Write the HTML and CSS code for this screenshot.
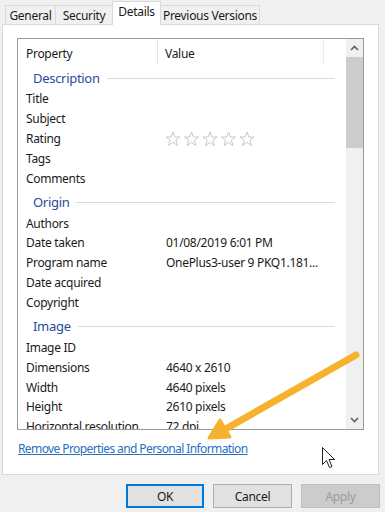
FILE: index.html
```html
<!DOCTYPE html>
<html>
<head>
<meta charset="utf-8">
<link rel="stylesheet" href="styles.css">
</head>
<body>
<div class="dialog">
  <div class="tabs">
    <div class="tab t-general">General</div>
    <div class="tab t-security">Security</div>
    <div class="tab active t-details">Details</div>
    <div class="tab t-prev">Previous Versions</div>
  </div>
  <div class="page">
    <div class="list">
      <div class="list-body">
        <div class="head">
          <div class="hk">Property</div>
          <div class="hv">Value</div>
        </div>
        <div class="group"><span>Description</span><i></i></div>
        <div class="row"><div class="k">Title</div><div class="v"></div></div>
        <div class="row"><div class="k">Subject</div><div class="v"></div></div>
        <div class="row"><div class="k">Rating</div><div class="v">
          <svg class="stars" width="92" height="16" viewBox="0 0 92 16">
            <g fill="none" stroke="#c8c8c8" stroke-width="1">
              <polygon points="8,1 9.9,6 15,6 10.9,9.2 12.4,14.5 8,11.3 3.6,14.5 5.1,9.2 1,6 6.1,6"/>
              <polygon transform="translate(18.5 0)" points="8,1 9.9,6 15,6 10.9,9.2 12.4,14.5 8,11.3 3.6,14.5 5.1,9.2 1,6 6.1,6"/>
              <polygon transform="translate(37 0)" points="8,1 9.9,6 15,6 10.9,9.2 12.4,14.5 8,11.3 3.6,14.5 5.1,9.2 1,6 6.1,6"/>
              <polygon transform="translate(55.5 0)" points="8,1 9.9,6 15,6 10.9,9.2 12.4,14.5 8,11.3 3.6,14.5 5.1,9.2 1,6 6.1,6"/>
              <polygon transform="translate(74 0)" points="8,1 9.9,6 15,6 10.9,9.2 12.4,14.5 8,11.3 3.6,14.5 5.1,9.2 1,6 6.1,6"/>
            </g>
          </svg>
        </div></div>
        <div class="row"><div class="k">Tags</div><div class="v"></div></div>
        <div class="row"><div class="k">Comments</div><div class="v"></div></div>
        <div class="group"><span>Origin</span><i></i></div>
        <div class="row"><div class="k">Authors</div><div class="v"></div></div>
        <div class="row"><div class="k">Date taken</div><div class="v">01/08/2019 6:01 PM</div></div>
        <div class="row"><div class="k">Program name</div><div class="v">OnePlus3-user 9 PKQ1.181...</div></div>
        <div class="row"><div class="k">Date acquired</div><div class="v"></div></div>
        <div class="row"><div class="k">Copyright</div><div class="v"></div></div>
        <div class="group"><span>Image</span><i></i></div>
        <div class="row"><div class="k">Image ID</div><div class="v"></div></div>
        <div class="row"><div class="k">Dimensions</div><div class="v">4640 x 2610</div></div>
        <div class="row"><div class="k">Width</div><div class="v">4640 pixels</div></div>
        <div class="row"><div class="k">Height</div><div class="v">2610 pixels</div></div>
        <div class="row"><div class="k">Horizontal resolution</div><div class="v">72 dpi</div></div>
      </div>
      <div class="scroll">
        <div class="sbtn">
          <svg width="9" height="6" viewBox="0 0 9 6"><polyline points="1,5 4.5,1.5 8,5" fill="none" stroke="#606060" stroke-width="1.6"/></svg>
        </div>
        <div class="thumb"></div>
        <div class="track"></div>
        <div class="sbtn">
          <svg width="9" height="6" viewBox="0 0 9 6"><polyline points="1,1 4.5,4.5 8,1" fill="none" stroke="#606060" stroke-width="1.6"/></svg>
        </div>
      </div>
    </div>
    <a class="link" href="#">Remove Properties and Personal Information</a>
  </div>
  <div class="buttons">
    <div class="btn ok">OK</div>
    <div class="btn">Cancel</div>
    <div class="btn disabled">Apply</div>
  </div>
</div>
<svg class="overlay" width="385" height="512" viewBox="0 0 385 512">
  <line x1="356" y1="355" x2="222" y2="431" stroke="#f6b12e" stroke-width="7" stroke-linecap="round"/>
  <polygon points="209,438 220,420 230,437" fill="#f6b12e" stroke="#f6b12e" stroke-width="3" stroke-linejoin="round"/>
  <path d="M322.5,447.5 L322.5,464.5 L326.5,460.5 L329.5,467.5 L332,466.5 L329,459.5 L334.5,459.5 Z" fill="#fff" stroke="#222" stroke-width="1" stroke-linejoin="round"/>
</svg>
</body>
</html>
```
FILE: styles.css
```css
html, body {
  margin: 0;
  padding: 0;
}
body {
  width: 385px;
  height: 512px;
  overflow: hidden;
  position: relative;
  background: #f0f0f0;
  font-family: "Noto Sans", "Open Sans", sans-serif;
  font-size: 12px;
  letter-spacing: -0.3px;
  color: #1a1a1a;
}
.dialog {
  display: flex;
  flex-direction: column;
}
.tabs {
  display: flex;
  align-items: flex-end;
  height: 24px;
  padding-left: 5px;
  position: relative;
  z-index: 1;
}
.tab {
  height: 19px;
  line-height: 19px;
  box-sizing: border-box;
  border: 1px solid #d9d9d9;
  border-bottom: none;
  background: #f0f0f0;
  text-align: center;
  white-space: nowrap;
  margin-right: -1px;
}
.t-general { width: 51px; }
.t-security { width: 58px; }
.t-details { width: 49px; }
.t-prev { width: 100px; }
.tab.active {
  height: 24px;
  line-height: 20px;
  background: #fff;
  margin-bottom: -1px;
  position: relative;
}
.page {
  margin-left: 2px;
  width: 377px;
  height: 451px;
  box-sizing: border-box;
  background: #fff;
  border: 1px solid #d9d9d9;
  padding: 13px 14px 0 14px;
  display: flex;
  flex-direction: column;
}
.list {
  height: 392px;
  box-sizing: border-box;
  border: 1px solid #9a9a9a;
  display: flex;
  overflow: hidden;
}
.list-body {
  flex: 1;
  overflow: hidden;
}
.head {
  display: flex;
  height: 25px;
  align-items: stretch;
}
.hk {
  width: 140px;
  box-sizing: border-box;
  padding: 3px 0 0 8px;
  display: flex;
  align-items: center;
  border-right: 1px solid #e5e5e5;
}
.hv {
  width: 166px;
  box-sizing: border-box;
  padding: 3px 0 0 7px;
  display: flex;
  align-items: center;
  border-right: 1px solid #ececec;
}
.group {
  height: 25px;
  box-sizing: border-box;
  padding: 2px 11px 0 15px;
  display: flex;
  align-items: center;
  color: #2a4b9b;
  font-size: 13px;
}
.group i {
  flex: 1;
  height: 1px;
  background: #d2dce4;
  margin-left: 7px;
  margin-top: 1px;
}
.row {
  display: flex;
  height: 19.85px;
  align-items: center;
  white-space: nowrap;
}
.k {
  width: 140px;
  box-sizing: border-box;
  padding-left: 8px;
}
.v {
  padding-left: 8px;
  display: flex;
  align-items: center;
}
.stars {
  display: block;
  margin-left: -1px;
}
.scroll {
  width: 17px;
  background: #f0f0f0;
  display: flex;
  flex-direction: column;
}
.sbtn {
  height: 18px;
  display: flex;
  align-items: center;
  justify-content: center;
}
.thumb {
  height: 91px;
  background: #cdcdcd;
}
.track {
  flex: 1;
}
.link {
  margin-top: 11px;
  margin-left: 1px;
  color: #2a6fc0;
  text-decoration: underline;
  line-height: 16px;
  letter-spacing: -0.6px;
  align-self: flex-start;
}
.buttons {
  display: flex;
  justify-content: flex-end;
  gap: 9px;
  padding-right: 5px;
  margin-top: 9px;
}
.btn {
  width: 79px;
  height: 24px;
  box-sizing: border-box;
  background: #e1e1e1;
  border: 1px solid #adadad;
  display: flex;
  align-items: center;
  justify-content: center;
}
.btn.ok {
  border: 2px solid #0078d7;
  width: 78px;
}
.btn.disabled {
  background: #cccccc;
  border-color: #bfbfbf;
  color: #9a9a9a;
}
.overlay {
  position: absolute;
  left: 0;
  top: 0;
  pointer-events: none;
}
```
